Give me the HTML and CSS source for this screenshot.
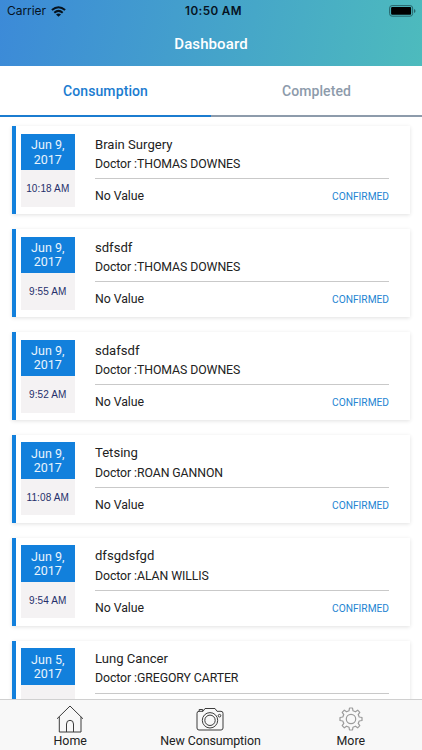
FILE: index.html
```html
<!DOCTYPE html>
<html lang="en">
<head>
<meta charset="utf-8">
<title>Dashboard</title>
<link rel="stylesheet" href="styles.css">
</head>
<body>
<header class="header">
  <div class="status">
    <div class="carrier"><span>Carrier</span>
      <svg width="15" height="11" viewBox="0 0 15 11" fill="none" stroke="#06131f" stroke-width="2"><path d="M.9 4.1Q7.5-1.7 14.1 4.1M3.3 6.7Q7.5 3.1 11.7 6.7"/><path d="M5 8.4Q7.5 6.6 10 8.4L7.5 10.8Z" fill="#06131f" stroke="none"/></svg>
    </div>
    <div class="clock">10:50 AM</div>
    <svg class="battery" width="27" height="12" viewBox="0 0 27 12"><rect x=".6" y=".6" width="23" height="10.6" rx="2.5" fill="none" stroke="#28656b"/><rect x="2.1" y="2.1" width="20" height="7.6" rx="1" fill="#000"/><path d="M25 4v4q1.5-.6 1.5-2T25 4" fill="#28656b"/></svg>
  </div>
  <h1 class="title">Dashboard</h1>
</header>
<nav class="tabs"><div class="tab active">Consumption</div><div class="tab">Completed</div></nav>
<main class="list">
  <article class="card"><div class="when"><div class="date">Jun 9,<br>2017</div><div class="time">10:18 AM</div></div><div class="info"><div class="name">Brain Surgery</div><div class="doctor">Doctor :THOMAS DOWNES</div><div class="foot"><span class="value">No Value</span><span class="state">CONFIRMED</span></div></div></article>
  <article class="card"><div class="when"><div class="date">Jun 9,<br>2017</div><div class="time">9:55 AM</div></div><div class="info"><div class="name">sdfsdf</div><div class="doctor">Doctor :THOMAS DOWNES</div><div class="foot"><span class="value">No Value</span><span class="state">CONFIRMED</span></div></div></article>
  <article class="card"><div class="when"><div class="date">Jun 9,<br>2017</div><div class="time">9:52 AM</div></div><div class="info"><div class="name">sdafsdf</div><div class="doctor">Doctor :THOMAS DOWNES</div><div class="foot"><span class="value">No Value</span><span class="state">CONFIRMED</span></div></div></article>
  <article class="card"><div class="when"><div class="date">Jun 9,<br>2017</div><div class="time">11:08 AM</div></div><div class="info"><div class="name">Tetsing</div><div class="doctor">Doctor :ROAN GANNON</div><div class="foot"><span class="value">No Value</span><span class="state">CONFIRMED</span></div></div></article>
  <article class="card"><div class="when"><div class="date">Jun 9,<br>2017</div><div class="time">9:54 AM</div></div><div class="info"><div class="name">dfsgdsfgd</div><div class="doctor">Doctor :ALAN WILLIS</div><div class="foot"><span class="value">No Value</span><span class="state">CONFIRMED</span></div></div></article>
  <article class="card"><div class="when"><div class="date">Jun 5,<br>2017</div><div class="time"></div></div><div class="info"><div class="name">Lung Cancer</div><div class="doctor">Doctor :GREGORY CARTER</div><div class="foot"></div></div></article>
</main>
<footer class="bar">
  <div class="item"><svg width="28" height="28" viewBox="0 0 28 28" fill="none" stroke="#3c3c3c"><path d="M1 13.8 14 1 27 13.8M3.3 11.8V27H25V11.8M10.5 27V19Q10.5 15.3 14 15.3T17.5 19V27"/></svg><span>Home</span></div>
  <div class="item"><svg width="28" height="28" viewBox="0 0 28 28" fill="none" stroke="#3c3c3c"><path d="M3 6.3H7L9 3.5H19L21 6.3H25Q27 6.3 27 8.3V23Q27 25 25 25H3Q1 25 1 23V8.3Q1 6.3 3 6.3ZM3.2 6.3V4.5H6.7V6.3"/><circle cx="14" cy="15.3" r="7.7"/><circle cx="14" cy="15.3" r="5.2"/><circle cx="23.5" cy="10.7" r="1.3"/></svg><span class="wide">New Consumption</span></div>
  <div class="item"><svg width="28" height="28" viewBox="-14 -14 28 28" fill="none" stroke="#9b9b9b" stroke-width="1.2" stroke-linejoin="round"><path d="M-2-8.2-1.5-11H1.5L2-8.2 4.4-7.2 6.7-8.8 8.8-6.7 7.2-4.4 8.2-2 11-1.5V1.5L8.2 2 7.2 4.4 8.8 6.7 6.7 8.8 4.4 7.2 2 8.2 1.5 11H-1.5L-2 8.2-4.4 7.2-6.7 8.8-8.8 6.7-7.2 4.4-8.2 2-11 1.5V-1.5L-8.2-2-7.2-4.4-8.8-6.7-6.7-8.8-4.4-7.2Z"/><circle r="4.7"/></svg><span>More</span></div>
</footer>
</body>
</html>
```
FILE: styles.css
```css
* { box-sizing: border-box; }
body { margin: 0; width: 422px; height: 750px; overflow: hidden; display: flex; flex-direction: column; background: #fff; font-family: Roboto, sans-serif; color: #222; }
svg { display: block; flex: none; }
.header { flex: none; height: 65.5px; background: linear-gradient(100deg, #3c8ad8, #4dbbbd); }
.status { height: 22px; padding: 0 6px 0 7px; display: grid; grid-template-columns: 1fr auto 1fr; align-items: center; font: 12px/22px Inter, sans-serif; color: #06131f; }
.carrier { display: flex; gap: 5px; align-items: center; letter-spacing: -.05px; }
.clock { padding-left: 4px; font-size: 11.7px; font-weight: 600; letter-spacing: .4px; }
.battery { justify-self: end; }
.title { margin: 0; text-align: center; font-size: 15px; line-height: 44px; font-weight: 500; letter-spacing: .1px; color: #fff; }
.tabs { flex: none; height: 51px; display: flex; }
.tab { flex: 1; text-align: center; font-size: 14px; font-weight: 500; line-height: 51px; letter-spacing: .1px; color: #8d9bab; border-bottom: 2px solid #8d9bab; }
.active { color: #1b7cd0; border-color: #1b7cd0; }
.list { flex: 1; min-height: 0; overflow: hidden; padding: 9.9px 12.4px 0; }
.card { height: 87.7px; margin-bottom: 15.2px; border-left: 4px solid #1280dc; padding: 7.4px 20.6px 7.3px 4.5px; display: flex; gap: 20.4px; background: #fff; box-shadow: 0 1px 4px rgba(0,0,0,.12); }
.when { width: 53.7px; flex: none; background: #f4f2f3; }
.date { height: 36.6px; padding-top: 4.4px; background: #1280dc; color: #e9f4fd; text-align: center; font-size: 12.5px; line-height: 14.4px; }
.time { text-align: center; font: 10px/38px "Liberation Sans", sans-serif; letter-spacing: .12px; color: #25306b; white-space: nowrap; }
.info { flex: 1; }
.name { padding-top: 1px; font-size: 13.1px; line-height: 20px; height: 20.5px; }
.doctor { padding-top: .8px; font-size: 12.3px; line-height: 19px; height: 24px; letter-spacing: -.08px; white-space: nowrap; }
.foot { height: 36px; border-top: 1px solid #c9c9c9; display: flex; justify-content: space-between; line-height: 35.6px; }
.value { font-size: 12.3px; letter-spacing: -.05px; }
.state { font-size: 10.2px; line-height: 35px; color: #2484d2; }
.bar { flex: none; height: 51px; display: grid; grid-template-columns: repeat(3, 1fr); padding-right: 1px; border-top: 1px solid #d0d0d0; background: #f8f8f8; }
.item { display: flex; flex-direction: column; align-items: center; padding-top: 5px; font-size: 12.4px; line-height: 16px; }
.wide { letter-spacing: -.1px; }
```
